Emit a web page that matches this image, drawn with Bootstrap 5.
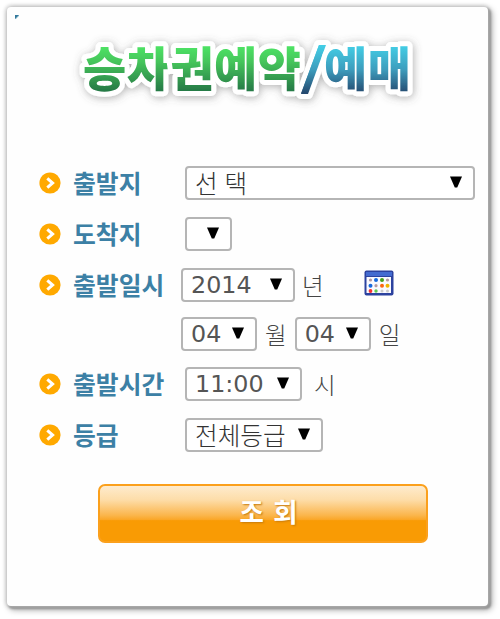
<!DOCTYPE html>
<html lang="ko">
<head>
<meta charset="utf-8">
<meta name="viewport" content="width=device-width, initial-scale=1">
<title>승차권예약/예매</title>
<link href="https://cdn.jsdelivr.net/npm/bootstrap@5.3.0/dist/css/bootstrap.min.css" rel="stylesheet">
<style>
body{background:#fff;font-family:"Noto Sans CJK KR","Noto Sans",sans-serif;height:619px;padding:7px 0 0 7px;overflow:hidden}
.panel{width:481px;height:599px;border-radius:4px;background:#fefefe;
 box-shadow:0 0 4px 1px #bbb,2px 2px 2px 1px #8b8b8b,3px 3px 6px 1px #aaa}
.corner{width:4px;height:4px;left:8px;top:8px;background:linear-gradient(135deg,#34799c 45%,#b5d5df 55%,transparent 75%)}
.heading{height:159px}
.field{height:34px;padding-left:32px}
.bullet{width:22px;height:22px;margin-right:12px;flex:none}
.caption{width:112px;flex:none;font-size:24.8px;line-height:32px;padding-bottom:2px;font-weight:700;color:#3c80a5;white-space:nowrap}
.caption.near{width:108px}
.pick{height:34px;border:2px solid #b5b5b5;border-radius:4px;padding:0 0 2px 8px;color:#333;background-color:#fff;
 background-image:url("data:image/svg+xml,%3Csvg xmlns='http://www.w3.org/2000/svg' viewBox='0 0 12 12'%3E%3Cpath d='M0 .5H12L7.2 11.5H4.800Z' fill='%23000'/%3E%3C/svg%3E");
 background-size:12px 12px;background-position:right 11px top 8px;font-size:24.6px;line-height:28px;font-weight:300;flex:none}
.num{font-family:"DejaVu Sans",sans-serif;font-size:23.8px;font-weight:400;color:#555;padding-bottom:0;line-height:30px}
.w-from{width:290px}.w-to{width:47px}.w-year{width:114px}.w-day{width:76px}.w-time{width:117px}.w-grade{width:138px}
.unit{font-size:23.5px;line-height:34px;font-weight:300;color:#444}
.mt-row{margin-top:17px}.month-row{margin-top:15px;padding-left:174px}.time-row{margin-top:16px}
.unit-year{margin-left:7px}.calendar{margin-left:40px;margin-top:-5px}.unit-month{margin:0 8px}.unit-day{margin-left:8px}.unit-time{margin-left:12px}
.search{width:330px;height:59px;margin:32px 0 0 91px;padding:0 0 6px 11px;border:2px solid #fba01c;border-radius:7px;color:#fff;font-size:26.5px;font-weight:700;line-height:50px;word-spacing:2px;
 background:linear-gradient(#feebcd 0,#fddda9 25%,#fbb64d 53%,#faa729 61%,#f99b04 63%,#f99b04 100%);text-shadow:1px 1px 2px #c77a0d}
.search:hover{color:#fff}
</style>
</head>
<body>
<svg width="0" height="0" class="position-absolute" aria-hidden="true">
 <symbol id="go" viewBox="0 0 22 22"><circle cx="11" cy="11" r="10.6" fill="#ffa900"/><path d="M8.3 6.4 13.6 11 8.3 15.6" fill="none" stroke="#fff" stroke-width="3"/></symbol>
</svg>
<main class="panel position-relative">
 <span class="corner position-absolute"></span>
 <h1 class="heading m-0">
  <svg width="480" height="140" viewBox="7 7 480 140" class="d-block" role="img" aria-label="승차권예약/예매">
   <defs>
    <linearGradient id="green" gradientUnits="userSpaceOnUse" x1="0" y1="46" x2="0" y2="92"><stop offset="0" stop-color="#4ee465"/><stop offset=".35" stop-color="#45c45b"/><stop offset="1" stop-color="#257746"/></linearGradient>
    <linearGradient id="blue" gradientUnits="userSpaceOnUse" x1="0" y1="46" x2="0" y2="93"><stop offset="0" stop-color="#43cde5"/><stop offset=".5" stop-color="#3d9dbd"/><stop offset="1" stop-color="#254a70"/></linearGradient>
    <filter id="soft" x="-10%" y="-30%" width="120%" height="170%"><feDropShadow dx="1" dy="1.500" stdDeviation="4" flood-color="#555" flood-opacity=".45"/></filter>
   </defs>
   <g filter="url(#soft)" font-family="Noto Sans CJK KR, sans-serif" font-weight="900" font-size="47" stroke="#fff" stroke-width="10" stroke-linejoin="round" paint-order="stroke">
    <path d="M319 45h7L308 94h-7Z" fill="url(#blue)"/>
    <text x="83" y="86" textLength="218" fill="url(#green)">승차권예약</text>
    <text x="324" y="86" textLength="87" fill="url(#blue)">예매</text>
   </g>
   <path d="M319 45h6L307.500 93.500h-6.500Z" fill="url(#blue)"/>
  </svg>
 </h1>
 <form>
  <div class="field d-flex align-items-center"><svg class="bullet"><use href="#go"/></svg><label class="caption" for="from">출발지</label><select id="from" class="form-select pick w-from"><option>선 택</option></select></div>
  <div class="field d-flex align-items-center mt-row"><svg class="bullet"><use href="#go"/></svg><label class="caption" for="to">도착지</label><select id="to" class="form-select pick w-to"><option></option></select></div>
  <div class="field d-flex align-items-center mt-row"><svg class="bullet"><use href="#go"/></svg><label class="caption near" for="year">출발일시</label><select id="year" class="form-select pick num w-year"><option>2014</option></select><span class="unit unit-year">년</span>
   <svg class="calendar" width="30" height="26" viewBox="0 0 30 26" aria-hidden="true"><rect x=".5" y=".5" width="29" height="25" rx="2" fill="#2c429f"/><path d="M2 2H28V6H2Z" fill="#436bd0"/><path d="M2.500 7H27V23H2.500Z" fill="#fafaff"/>
    <g fill="#b49aa1"><circle cx="6.500" cy="10" r="1.600"/><circle cx="23.500" cy="10" r="1.600"/><circle cx="12" cy="15.700" r="1.600"/><circle cx="18" cy="21" r="1.500" fill="#ccc"/><circle cx="23.500" cy="21" r="1.500" fill="#ccc"/></g>
    <g fill="#1769de"><circle cx="12" cy="10" r="2"/><circle cx="6.500" cy="15.700" r="2"/></g><circle cx="18" cy="10" r="2" fill="#46a01d"/><circle cx="18" cy="15.700" r="2" fill="#fa6812"/><circle cx="23.500" cy="15.700" r="2" fill="#efb500"/><circle cx="6.500" cy="21" r="1.900" fill="#f83232"/><circle cx="12" cy="21" r="1.700" fill="#61c750"/></svg></div>
  <div class="field d-flex align-items-center month-row"><select class="form-select pick num w-day" aria-label="월"><option>04</option></select><span class="unit unit-month">월</span><select class="form-select pick num w-day" aria-label="일"><option>04</option></select><span class="unit unit-day">일</span></div>
  <div class="field d-flex align-items-center time-row"><svg class="bullet"><use href="#go"/></svg><label class="caption" for="time">출발시간</label><select id="time" class="form-select pick num w-time"><option>11:00</option></select><span class="unit unit-time">시</span></div>
  <div class="field d-flex align-items-center mt-row"><svg class="bullet"><use href="#go"/></svg><label class="caption" for="grade">등급</label><select id="grade" class="form-select pick w-grade"><option>전체등급</option></select></div>
  <button type="button" class="btn search d-block">조 회</button>
 </form>
</main>
<script src="https://cdn.jsdelivr.net/npm/bootstrap@5.3.0/dist/js/bootstrap.bundle.min.js"></script>
</body>
</html>
